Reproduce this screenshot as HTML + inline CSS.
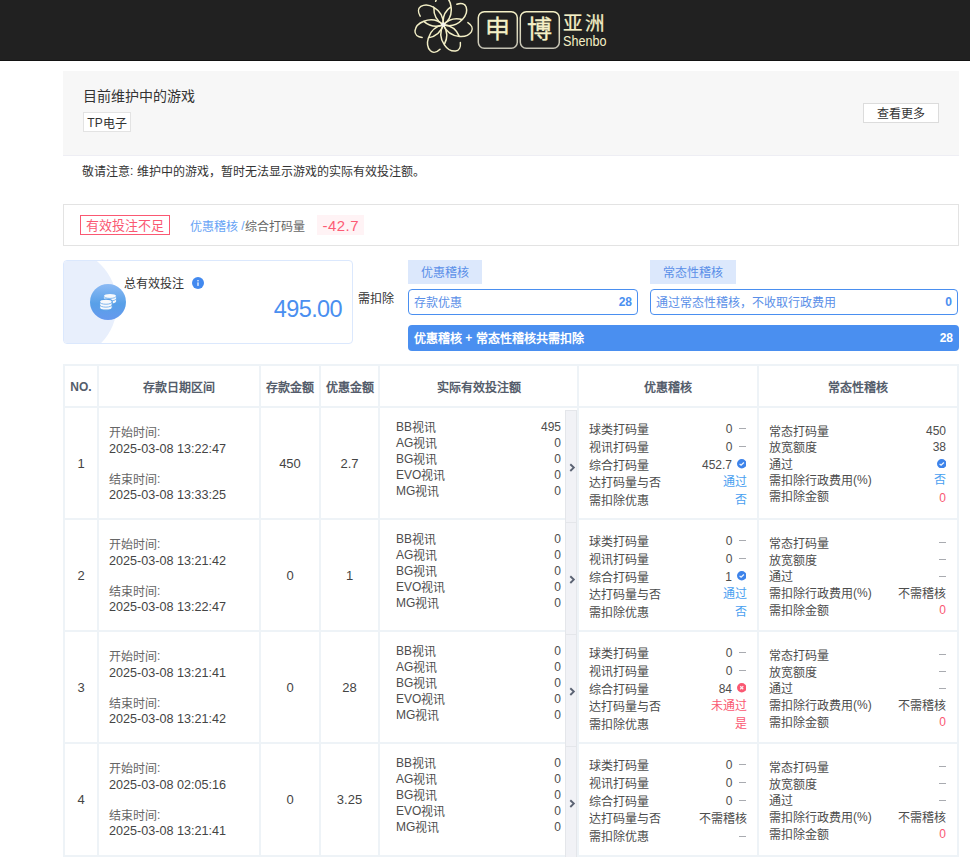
<!DOCTYPE html><html lang="zh-CN"><head><meta charset="utf-8"><title>page</title><style>
*{margin:0;padding:0;box-sizing:border-box}
html,body{width:970px;height:857px;overflow:hidden;background:#fff}
body{position:relative;font-family:"Liberation Sans",sans-serif;color:#333;font-size:12px;line-height:12px}
.a{position:absolute;white-space:nowrap}
.hdr{left:0;top:0;width:970px;height:61px;background:#212121;border-bottom:1px solid #131313}
.gbox{left:63px;top:71px;width:896px;height:85px;background:#f7f7f7;border-bottom:1px solid #eeeef4}
.tag{left:83px;top:112px;width:48px;height:20px;border:1px solid #e3e3e3;background:#fff;text-align:center;line-height:20px;font-size:12px}
.btn{left:863px;top:103px;width:76px;height:20px;border:1px solid #dcdcdc;background:#fff;text-align:center;line-height:18px;font-size:12px}
.alert{left:63px;top:204px;width:896px;height:42px;border:1px solid #e3e3e3}
.rtag{left:80px;top:215px;width:90px;height:20px;border:1px solid #fa5872;color:#fa5872;font-size:13px;line-height:18px;text-align:center}
.pink{left:317px;top:215px;width:47px;height:20px;background:#fff3f5;color:#fd5b75;font-size:15px;line-height:21px;letter-spacing:0.5px;text-indent:0.5px;text-align:center}
.card{left:63px;top:260px;width:290px;height:84px;border:1px solid #dbe8fd;border-radius:4px;overflow:hidden;background:#fff}
.tab{top:260px;height:24px;background:#dce8fc;color:#5a8fe8;font-size:12px;line-height:24px;text-align:center}
.inp{top:289px;height:26px;border:1px solid #4a8ff0;border-radius:4px;color:#5a8fe8;font-size:12px;line-height:24px;padding:0 5px}
.inp b{position:absolute;right:5px;top:0;color:#4a8ff0}
.bar{left:408px;top:325px;width:551px;height:26px;background:#4a8ff0;border-radius:4px;color:#fff;font-size:12px;line-height:26px;padding:0 6px;font-weight:bold}
.bar b{position:absolute;right:6px;top:0}
.gl{background:#eef3f7}
.c{position:relative;top:1px}
.nc .c,.blu .c,.red .c{top:0}
.th{text-align:center;font-weight:bold;color:#555d6b;font-size:12px;line-height:14px}
.td{text-align:center;color:#444;font-size:13px;line-height:15px}
.lbl{color:#666;font-size:12px;line-height:14px}
.dt{color:#444;font-size:12.6px;line-height:15px}
.bet{color:#4d4d4d;font-size:12px;line-height:14px}
.r{position:absolute;right:0;top:0}
.strip{width:12px;background:#f1f2f6;border:1px solid #e4e6ea}
.yh,.ch{color:#4d4d4d;font-size:12px;line-height:14px}
.blu{color:#49a0f0}.red{color:#fa5872}
.dh{width:7px;height:1px;background:#a9abb0}

</style></head><body>
<div class="a hdr"></div>
<svg class="a" style="left:0;top:0" width="970" height="61"><g transform="translate(443.3 24.8)" fill="none" stroke="#f3efc6" stroke-width="1.5" stroke-linecap="round"><path d="M0 0Q6 -9.9 0 -19.8Q-6 -9.9 0 0M0 -19.8C-2.5 -24 -7 -27 -11 -26.8C-14.5 -26.5 -16.5 -23 -16.2 -18.6" transform="rotate(23.00)"/><path d="M0 0Q6 -9.9 0 -19.8Q-6 -9.9 0 0M0 -19.8C-2.5 -24 -7 -27 -11 -26.8C-14.5 -26.5 -16.5 -23 -16.2 -18.6" transform="rotate(-28.43)"/><path d="M0 0Q6 -9.9 0 -19.8Q-6 -9.9 0 0M0 -19.8C-2.5 -24 -7 -27 -11 -26.8C-14.5 -26.5 -16.5 -23 -16.2 -18.6" transform="rotate(-79.86)"/><path d="M0 0Q6 -9.9 0 -19.8Q-6 -9.9 0 0M0 -19.8C-2.5 -24 -7 -27 -11 -26.8C-14.5 -26.5 -16.5 -23 -16.2 -18.6" transform="rotate(-131.29)"/><path d="M0 0Q6 -9.9 0 -19.8Q-6 -9.9 0 0M0 -19.8C-2.5 -24 -7 -27 -11 -26.8C-14.5 -26.5 -16.5 -23 -16.2 -18.6" transform="rotate(-182.71)"/><path d="M0 0Q6 -9.9 0 -19.8Q-6 -9.9 0 0M0 -19.8C-2.5 -24 -7 -27 -11 -26.8C-14.5 -26.5 -16.5 -23 -16.2 -18.6" transform="rotate(-234.14)"/><path d="M0 0Q6 -9.9 0 -19.8Q-6 -9.9 0 0M0 -19.8C-2.5 -24 -7 -27 -11 -26.8C-14.5 -26.5 -16.5 -23 -16.2 -18.6" transform="rotate(-285.57)"/><circle r="2.2" fill="#f4f4ee" stroke="none"/></g><defs><linearGradient id="bx" x1="0" y1="0" x2="0" y2="1"><stop offset="0" stop-color="#f6f1c6"/><stop offset="0.6" stop-color="#d9d6bc"/><stop offset="1" stop-color="#c4c2b4"/></linearGradient></defs><rect x="478.3" y="11.8" width="39" height="36.4" rx="6" fill="none" stroke="url(#bx)" stroke-width="1.5"/><rect x="520.3" y="11.8" width="39" height="36.4" rx="6" fill="none" stroke="url(#bx)" stroke-width="1.5"/></svg>
<div class="a nc" style="left:477px;top:14px;width:41px;text-align:center;font-size:25px;line-height:30px;color:#f5f0c6;-webkit-text-stroke:0.3px #f5f0c6"><span class="c">申</span></div>
<div class="a nc" style="left:519px;top:14px;width:41px;text-align:center;font-size:25px;line-height:30px;color:#f5f0c6;-webkit-text-stroke:0.3px #f5f0c6"><span class="c">博</span></div>
<div class="a nc" style="left:563px;top:12.5px;font-size:19.5px;line-height:20px;color:#f5f0c6;letter-spacing:1.8px;-webkit-text-stroke:0.2px #f5f0c6"><span class="c">亚洲</span></div>
<div class="a" style="left:563px;top:34px;font-size:14px;line-height:14px;color:#f5f0c6;transform:scaleX(0.9);transform-origin:0 0">Shenbo</div>
<div class="a gbox"></div>
<div class="a nc" style="left:83px;top:89px;font-size:14px;line-height:14px;color:#333"><span class="c">目前维护中的游戏</span></div>
<div class="a tag">TP<span class="c">电子</span></div>
<div class="a btn"><span class="c">查看更多</span></div>
<div class="a" style="left:82px;top:165px;font-size:12px;color:#333"><span class="c">敬请注意</span>: <span class="c">维护中的游戏，暂时无法显示游戏的实际有效投注额。</span></div>
<div class="a alert"></div>
<div class="a rtag"><span class="c">有效投注不足</span></div>
<div class="a" style="left:190px;top:220px;font-size:12px;color:#67a3f5"><span class="c">优惠稽核</span> /<span style="color:#666"><span class="c">综合打码量</span></span></div>
<div class="a pink">-42.7</div>
<div class="a card"><div class="a" style="left:-59px;top:-13px;width:112px;height:112px;border-radius:50%;background:#e8effc"></div></div>
<div class="a" style="left:90px;top:284px;width:36px;height:36px;border-radius:50%;background:linear-gradient(#8cbaf4,#58a0e8 55%,#6699ee)"></div>
<svg class="a" style="left:90px;top:284px" width="36" height="36"><path d="M13.9 12.1A6.1 2.1 0 0 1 26.1 12.1L26.1 17.4A6.1 2.1 0 0 1 13.9 17.4Z" fill="#f7f9fc" stroke="#5aa0e8" stroke-width="0"/><path d="M13.9 12.3A6.1 2.1 0 0 0 26.1 12.3" fill="none" stroke="#5aa0e8" stroke-width="0.75"/><path d="M13.9 14.8A6.1 2.1 0 0 0 26.1 14.8" fill="none" stroke="#5aa0e8" stroke-width="0.75"/><path d="M9.600000000000001 17.6A6.3 2.45 0 0 1 22.2 17.6L22.2 23.7A6.3 2.45 0 0 1 9.600000000000001 23.7Z" fill="#f7f9fc" stroke="#59a0e8" stroke-width="1.1"/><path d="M9.600000000000001 17.8A6.3 2.45 0 0 0 22.2 17.8" fill="none" stroke="#59a0e8" stroke-width="0.75"/><path d="M9.600000000000001 20.7A6.3 2.45 0 0 0 22.2 20.7" fill="none" stroke="#59a0e8" stroke-width="0.75"/></svg>
<div class="a" style="left:124px;top:277px;font-size:12px;color:#333"><span class="c">总有效投注</span></div>
<svg class="a" style="left:192px;top:276.5px" width="12" height="12"><circle cx="6" cy="6" r="6" fill="#4289ef"/><circle cx="6" cy="3.7" r="0.8" fill="#f4f8fe"/><rect x="5.35" y="5.3" width="1.3" height="3.6" rx="0.4" fill="#f4f8fe"/></svg>
<div class="a" style="left:200px;top:295px;width:142px;text-align:right;font-size:23.5px;line-height:28px;color:#4a8ff0;letter-spacing:-0.6px">495.00</div>
<div class="a" style="left:358px;top:292px;font-size:12px;color:#333"><span class="c">需扣除</span></div>
<div class="a tab" style="left:408px;width:74px"><span class="c">优惠稽核</span></div>
<div class="a tab" style="left:650px;width:86px"><span class="c">常态性稽核</span></div>
<div class="a inp" style="left:408px;width:230px"><span class="c">存款优惠</span><b>28</b></div>
<div class="a inp" style="left:650px;width:308px"><span class="c">通过常态性稽核，不收取行政费用</span><b>0</b></div>
<div class="a bar"><span class="c">优惠稽核</span> + <span class="c">常态性稽核共需扣除</span><b>28</b></div>
<div class="a gl" style="left:63px;top:364px;width:2px;height:493px"></div>
<div class="a gl" style="left:97px;top:364px;width:2px;height:493px"></div>
<div class="a gl" style="left:259px;top:364px;width:2px;height:493px"></div>
<div class="a gl" style="left:319px;top:364px;width:2px;height:493px"></div>
<div class="a gl" style="left:378px;top:364px;width:2px;height:493px"></div>
<div class="a gl" style="left:577px;top:364px;width:2px;height:493px"></div>
<div class="a gl" style="left:757px;top:364px;width:2px;height:493px"></div>
<div class="a gl" style="left:957px;top:364px;width:2px;height:493px"></div>
<div class="a gl" style="left:63px;top:364px;width:896px;height:2px"></div>
<div class="a gl" style="left:63px;top:406px;width:896px;height:2px"></div>
<div class="a gl" style="left:63px;top:518px;width:896px;height:2px"></div>
<div class="a gl" style="left:63px;top:630px;width:896px;height:2px"></div>
<div class="a gl" style="left:63px;top:742px;width:896px;height:2px"></div>
<div class="a gl" style="left:63px;top:855px;width:896px;height:2px"></div>
<div class="a th" style="left:65px;top:380px;width:32px">NO.</div>
<div class="a th" style="left:99px;top:380px;width:160px"><span class="c">存款日期区间</span></div>
<div class="a th" style="left:261px;top:380px;width:58px"><span class="c">存款金额</span></div>
<div class="a th" style="left:321px;top:380px;width:57px"><span class="c">优惠金额</span></div>
<div class="a th" style="left:380px;top:380px;width:197px"><span class="c">实际有效投注额</span></div>
<div class="a th" style="left:579px;top:380px;width:178px"><span class="c">优惠稽核</span></div>
<div class="a th" style="left:759px;top:380px;width:198px"><span class="c">常态性稽核</span></div>
<div class="a td" style="left:65px;top:456px;width:32px">1</div>
<div class="a lbl" style="left:109px;top:425px"><span class="c">开始时间</span>:</div>
<div class="a dt" style="left:109px;top:442px">2025-03-08 13:22:47</div>
<div class="a lbl" style="left:109px;top:472px"><span class="c">结束时间</span>:</div>
<div class="a dt" style="left:109px;top:488px">2025-03-08 13:33:25</div>
<div class="a td" style="left:261px;top:456px;width:58px">450</div>
<div class="a td" style="left:321px;top:456px;width:57px">2.7</div>
<div class="a bet" style="left:396px;top:420px;width:165px">BB<span class="c">视讯</span><span class="r">495</span></div>
<div class="a bet" style="left:396px;top:436px;width:165px">AG<span class="c">视讯</span><span class="r">0</span></div>
<div class="a bet" style="left:396px;top:452px;width:165px">BG<span class="c">视讯</span><span class="r">0</span></div>
<div class="a bet" style="left:396px;top:468px;width:165px">EVO<span class="c">视讯</span><span class="r">0</span></div>
<div class="a bet" style="left:396px;top:484px;width:165px">MG<span class="c">视讯</span><span class="r">0</span></div>
<div class="a strip" style="left:565px;top:410px;height:113px"><svg class="a" style="left:3px;top:52px" width="7" height="10"><path d="M1.3 1.2L4.8 4.6L1.3 8" fill="none" stroke="#5b6373" stroke-width="1.9"/></svg></div>
<div class="a yh" style="left:589px;top:422.00px"><span class="c">球类打码量</span></div>
<div class="a yh" style="left:589px;top:422.00px;width:143.5px;text-align:right">0</div>
<div class="a dh" style="left:739px;top:428px"></div>
<div class="a yh" style="left:589px;top:439.80px"><span class="c">视讯打码量</span></div>
<div class="a yh" style="left:589px;top:439.80px;width:143.5px;text-align:right">0</div>
<div class="a dh" style="left:739px;top:446px"></div>
<div class="a yh" style="left:589px;top:457.60px"><span class="c">综合打码量</span></div>
<div class="a yh" style="left:589px;top:457.60px;width:143px;text-align:right">452.7</div>
<svg class="a" style="left:736.8px;top:459.4px" width="9.5" height="9.5" viewBox="0 0 10 10"><circle cx="5" cy="5" r="5" fill="#3d83ea"/><path d="M2.7 5.1L4.3 6.6L7.3 3.7" fill="none" stroke="#eef4fd" stroke-width="1.3"/></svg>
<div class="a yh" style="left:589px;top:475.40px"><span class="c">达打码量与否</span></div>
<div class="a yh" style="left:589px;top:475.40px;width:157.5px;text-align:right"><span class="blu"><span class="c">通过</span></span></div>
<div class="a yh" style="left:589px;top:493.20px"><span class="c">需扣除优惠</span></div>
<div class="a yh" style="left:589px;top:493.20px;width:157.5px;text-align:right"><span class="blu"><span class="c">否</span></span></div>
<div class="a ch" style="left:769px;top:424.00px"><span class="c">常态打码量</span></div>
<div class="a ch" style="left:769px;top:424.00px;width:177px;text-align:right">450</div>
<div class="a ch" style="left:769px;top:440.35px"><span class="c">放宽额度</span></div>
<div class="a ch" style="left:769px;top:440.35px;width:177px;text-align:right">38</div>
<div class="a ch" style="left:769px;top:456.70px"><span class="c">通过</span></div>
<svg class="a" style="left:936.5px;top:458.5px" width="9.5" height="9.5" viewBox="0 0 10 10"><circle cx="5" cy="5" r="5" fill="#3d83ea"/><path d="M2.7 5.1L4.3 6.6L7.3 3.7" fill="none" stroke="#eef4fd" stroke-width="1.3"/></svg>
<div class="a ch" style="left:769px;top:473.05px"><span class="c">需扣除行政费用</span>(%)</div>
<div class="a ch" style="left:769px;top:473.05px;width:177px;text-align:right"><span class="blu"><span class="c">否</span></span></div>
<div class="a ch" style="left:769px;top:489.40px"><span class="c">需扣除金额</span></div>
<div class="a ch" style="left:769px;top:490.90px;width:177px;text-align:right"><span class="red">0</span></div>
<div class="a td" style="left:65px;top:568px;width:32px">2</div>
<div class="a lbl" style="left:109px;top:537px"><span class="c">开始时间</span>:</div>
<div class="a dt" style="left:109px;top:554px">2025-03-08 13:21:42</div>
<div class="a lbl" style="left:109px;top:584px"><span class="c">结束时间</span>:</div>
<div class="a dt" style="left:109px;top:600px">2025-03-08 13:22:47</div>
<div class="a td" style="left:261px;top:568px;width:58px">0</div>
<div class="a td" style="left:321px;top:568px;width:57px">1</div>
<div class="a bet" style="left:396px;top:532px;width:165px">BB<span class="c">视讯</span><span class="r">0</span></div>
<div class="a bet" style="left:396px;top:548px;width:165px">AG<span class="c">视讯</span><span class="r">0</span></div>
<div class="a bet" style="left:396px;top:564px;width:165px">BG<span class="c">视讯</span><span class="r">0</span></div>
<div class="a bet" style="left:396px;top:580px;width:165px">EVO<span class="c">视讯</span><span class="r">0</span></div>
<div class="a bet" style="left:396px;top:596px;width:165px">MG<span class="c">视讯</span><span class="r">0</span></div>
<div class="a strip" style="left:565px;top:522px;height:113px"><svg class="a" style="left:3px;top:52px" width="7" height="10"><path d="M1.3 1.2L4.8 4.6L1.3 8" fill="none" stroke="#5b6373" stroke-width="1.9"/></svg></div>
<div class="a yh" style="left:589px;top:534.00px"><span class="c">球类打码量</span></div>
<div class="a yh" style="left:589px;top:534.00px;width:143.5px;text-align:right">0</div>
<div class="a dh" style="left:739px;top:540px"></div>
<div class="a yh" style="left:589px;top:551.80px"><span class="c">视讯打码量</span></div>
<div class="a yh" style="left:589px;top:551.80px;width:143.5px;text-align:right">0</div>
<div class="a dh" style="left:739px;top:558px"></div>
<div class="a yh" style="left:589px;top:569.60px"><span class="c">综合打码量</span></div>
<div class="a yh" style="left:589px;top:569.60px;width:143px;text-align:right">1</div>
<svg class="a" style="left:736.8px;top:571.4px" width="9.5" height="9.5" viewBox="0 0 10 10"><circle cx="5" cy="5" r="5" fill="#3d83ea"/><path d="M2.7 5.1L4.3 6.6L7.3 3.7" fill="none" stroke="#eef4fd" stroke-width="1.3"/></svg>
<div class="a yh" style="left:589px;top:587.40px"><span class="c">达打码量与否</span></div>
<div class="a yh" style="left:589px;top:587.40px;width:157.5px;text-align:right"><span class="blu"><span class="c">通过</span></span></div>
<div class="a yh" style="left:589px;top:605.20px"><span class="c">需扣除优惠</span></div>
<div class="a yh" style="left:589px;top:605.20px;width:157.5px;text-align:right"><span class="blu"><span class="c">否</span></span></div>
<div class="a ch" style="left:769px;top:536.00px"><span class="c">常态打码量</span></div>
<div class="a dh" style="left:939px;top:542px"></div>
<div class="a ch" style="left:769px;top:552.50px"><span class="c">放宽额度</span></div>
<div class="a dh" style="left:939px;top:559px"></div>
<div class="a ch" style="left:769px;top:569.20px"><span class="c">通过</span></div>
<div class="a dh" style="left:939px;top:576px"></div>
<div class="a ch" style="left:769px;top:586.30px"><span class="c">需扣除行政费用</span>(%)</div>
<div class="a ch" style="left:769px;top:586.30px;width:177px;text-align:right"><span class="c">不需稽核</span></div>
<div class="a ch" style="left:769px;top:603.00px"><span class="c">需扣除金额</span></div>
<div class="a ch" style="left:769px;top:603.00px;width:177px;text-align:right"><span class="red">0</span></div>
<div class="a td" style="left:65px;top:680px;width:32px">3</div>
<div class="a lbl" style="left:109px;top:649px"><span class="c">开始时间</span>:</div>
<div class="a dt" style="left:109px;top:666px">2025-03-08 13:21:41</div>
<div class="a lbl" style="left:109px;top:696px"><span class="c">结束时间</span>:</div>
<div class="a dt" style="left:109px;top:712px">2025-03-08 13:21:42</div>
<div class="a td" style="left:261px;top:680px;width:58px">0</div>
<div class="a td" style="left:321px;top:680px;width:57px">28</div>
<div class="a bet" style="left:396px;top:644px;width:165px">BB<span class="c">视讯</span><span class="r">0</span></div>
<div class="a bet" style="left:396px;top:660px;width:165px">AG<span class="c">视讯</span><span class="r">0</span></div>
<div class="a bet" style="left:396px;top:676px;width:165px">BG<span class="c">视讯</span><span class="r">0</span></div>
<div class="a bet" style="left:396px;top:692px;width:165px">EVO<span class="c">视讯</span><span class="r">0</span></div>
<div class="a bet" style="left:396px;top:708px;width:165px">MG<span class="c">视讯</span><span class="r">0</span></div>
<div class="a strip" style="left:565px;top:634px;height:113px"><svg class="a" style="left:3px;top:52px" width="7" height="10"><path d="M1.3 1.2L4.8 4.6L1.3 8" fill="none" stroke="#5b6373" stroke-width="1.9"/></svg></div>
<div class="a yh" style="left:589px;top:646.00px"><span class="c">球类打码量</span></div>
<div class="a yh" style="left:589px;top:646.00px;width:143.5px;text-align:right">0</div>
<div class="a dh" style="left:739px;top:652px"></div>
<div class="a yh" style="left:589px;top:663.80px"><span class="c">视讯打码量</span></div>
<div class="a yh" style="left:589px;top:663.80px;width:143.5px;text-align:right">0</div>
<div class="a dh" style="left:739px;top:670px"></div>
<div class="a yh" style="left:589px;top:681.60px"><span class="c">综合打码量</span></div>
<div class="a yh" style="left:589px;top:681.60px;width:143px;text-align:right">84</div>
<svg class="a" style="left:736.8px;top:683.4px" width="9.5" height="9.5" viewBox="0 0 10 10"><circle cx="5" cy="5" r="5" fill="#fa5872"/><path d="M3.4 3.4L6.6 6.6M6.6 3.4L3.4 6.6" fill="none" stroke="#fdeef1" stroke-width="1.3"/></svg>
<div class="a yh" style="left:589px;top:699.40px"><span class="c">达打码量与否</span></div>
<div class="a yh" style="left:589px;top:699.40px;width:157.5px;text-align:right"><span class="red"><span class="c">未通过</span></span></div>
<div class="a yh" style="left:589px;top:717.20px"><span class="c">需扣除优惠</span></div>
<div class="a yh" style="left:589px;top:717.20px;width:157.5px;text-align:right"><span class="red"><span class="c">是</span></span></div>
<div class="a ch" style="left:769px;top:648.00px"><span class="c">常态打码量</span></div>
<div class="a dh" style="left:939px;top:654px"></div>
<div class="a ch" style="left:769px;top:664.50px"><span class="c">放宽额度</span></div>
<div class="a dh" style="left:939px;top:671px"></div>
<div class="a ch" style="left:769px;top:681.20px"><span class="c">通过</span></div>
<div class="a dh" style="left:939px;top:688px"></div>
<div class="a ch" style="left:769px;top:698.30px"><span class="c">需扣除行政费用</span>(%)</div>
<div class="a ch" style="left:769px;top:698.30px;width:177px;text-align:right"><span class="c">不需稽核</span></div>
<div class="a ch" style="left:769px;top:715.00px"><span class="c">需扣除金额</span></div>
<div class="a ch" style="left:769px;top:715.00px;width:177px;text-align:right"><span class="red">0</span></div>
<div class="a td" style="left:65px;top:792px;width:32px">4</div>
<div class="a lbl" style="left:109px;top:761px"><span class="c">开始时间</span>:</div>
<div class="a dt" style="left:109px;top:778px">2025-03-08 02:05:16</div>
<div class="a lbl" style="left:109px;top:808px"><span class="c">结束时间</span>:</div>
<div class="a dt" style="left:109px;top:824px">2025-03-08 13:21:41</div>
<div class="a td" style="left:261px;top:792px;width:58px">0</div>
<div class="a td" style="left:321px;top:792px;width:57px">3.25</div>
<div class="a bet" style="left:396px;top:756px;width:165px">BB<span class="c">视讯</span><span class="r">0</span></div>
<div class="a bet" style="left:396px;top:772px;width:165px">AG<span class="c">视讯</span><span class="r">0</span></div>
<div class="a bet" style="left:396px;top:788px;width:165px">BG<span class="c">视讯</span><span class="r">0</span></div>
<div class="a bet" style="left:396px;top:804px;width:165px">EVO<span class="c">视讯</span><span class="r">0</span></div>
<div class="a bet" style="left:396px;top:820px;width:165px">MG<span class="c">视讯</span><span class="r">0</span></div>
<div class="a strip" style="left:565px;top:746px;height:120px"><svg class="a" style="left:3px;top:52px" width="7" height="10"><path d="M1.3 1.2L4.8 4.6L1.3 8" fill="none" stroke="#5b6373" stroke-width="1.9"/></svg></div>
<div class="a yh" style="left:589px;top:758.00px"><span class="c">球类打码量</span></div>
<div class="a yh" style="left:589px;top:758.00px;width:143.5px;text-align:right">0</div>
<div class="a dh" style="left:739px;top:764px"></div>
<div class="a yh" style="left:589px;top:775.80px"><span class="c">视讯打码量</span></div>
<div class="a yh" style="left:589px;top:775.80px;width:143.5px;text-align:right">0</div>
<div class="a dh" style="left:739px;top:782px"></div>
<div class="a yh" style="left:589px;top:793.60px"><span class="c">综合打码量</span></div>
<div class="a yh" style="left:589px;top:793.60px;width:143.5px;text-align:right">0</div>
<div class="a dh" style="left:739px;top:800px"></div>
<div class="a yh" style="left:589px;top:811.40px"><span class="c">达打码量与否</span></div>
<div class="a yh" style="left:589px;top:811.40px;width:157.5px;text-align:right"><span class="c">不需稽核</span></div>
<div class="a yh" style="left:589px;top:829.20px"><span class="c">需扣除优惠</span></div>
<div class="a dh" style="left:739px;top:836px"></div>
<div class="a ch" style="left:769px;top:760.00px"><span class="c">常态打码量</span></div>
<div class="a dh" style="left:939px;top:766px"></div>
<div class="a ch" style="left:769px;top:776.50px"><span class="c">放宽额度</span></div>
<div class="a dh" style="left:939px;top:783px"></div>
<div class="a ch" style="left:769px;top:793.20px"><span class="c">通过</span></div>
<div class="a dh" style="left:939px;top:800px"></div>
<div class="a ch" style="left:769px;top:810.30px"><span class="c">需扣除行政费用</span>(%)</div>
<div class="a ch" style="left:769px;top:810.30px;width:177px;text-align:right"><span class="c">不需稽核</span></div>
<div class="a ch" style="left:769px;top:827.00px"><span class="c">需扣除金额</span></div>
<div class="a ch" style="left:769px;top:827.00px;width:177px;text-align:right"><span class="red">0</span></div>
</body></html>
